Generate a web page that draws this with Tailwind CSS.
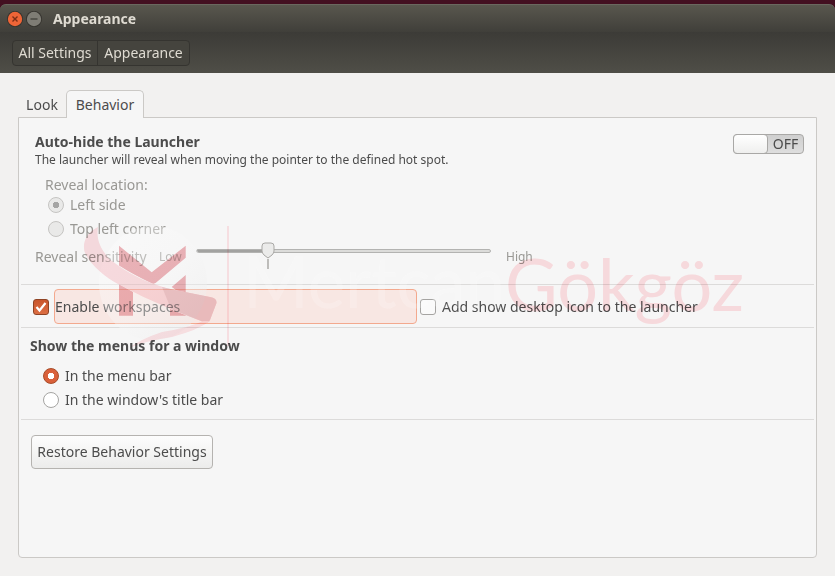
<!DOCTYPE html>
<html lang="en">
<head>
<meta charset="utf-8">
<meta name="viewport" content="width=device-width, initial-scale=1">
<title>Appearance</title>
<script src="https://cdn.jsdelivr.net/npm/@tailwindcss/browser@4"></script>
</head>
<body class="bg-[#431021] font-['Noto_Sans','Open_Sans',sans-serif] text-sm text-[#4c4c4c]">
<div class="relative flex min-h-screen flex-col pt-1">
  <header class="rounded-t-md bg-[#3f3e39] text-[#dfdbd2]">
    <div class="flex h-7 items-center gap-[3px] rounded-t-md border-t border-[#6a685f] bg-linear-to-b from-[#59574e] to-[#403f3a] px-[7px]">
      <button type="button" aria-label="Close" class="size-4 cursor-pointer">
        <svg viewBox="0 0 16 16" class="size-4"><circle cx="8" cy="8" r="8" fill="#33312c"/><circle cx="8" cy="8" r="7.2" fill="#ee6537"/><path d="M5.5 5.5l5 5m0-5l-5 5" stroke="#7b2f17" stroke-width="1.4"/></svg>
      </button>
      <button type="button" aria-label="Minimize" class="size-4 cursor-pointer">
        <svg viewBox="0 0 16 16" class="size-4"><circle cx="8" cy="8" r="8" fill="#33312c"/><circle cx="8" cy="8" r="7.2" fill="#7f7d75"/><path d="M4.5 8h7" stroke="#45443e" stroke-width="1.4"/></svg>
      </button>
      <h1 class="pl-2 font-bold">Appearance</h1>
    </div>
    <nav class="flex h-[41px] items-center bg-linear-to-b from-[#3c3b37] to-[#4f4e47] px-3" aria-label="Settings path">
      <div class="flex h-[26px] items-center rounded border border-[#353430] bg-[#45443e]">
        <a href="#" class="flex h-full w-[85px] items-center justify-center border-r border-[#353430]">All Settings</a>
        <a href="#" class="flex h-full w-[91px] items-center justify-center">Appearance</a>
      </div>
    </nav>
  </header>

  <main class="flex flex-1 flex-col bg-[#f2f1f0] px-[18px] pt-[17px] pb-[18px]">
    <div class="flex h-[27px] items-end" role="tablist">
      <button type="button" role="tab" aria-selected="false" class="h-6 w-12">Look</button>
      <button type="button" role="tab" aria-selected="true" class="relative z-10 -mb-px h-7 w-[78px] rounded-t-[5px] border border-b-0 border-[#cbc9c6] bg-[#f6f6f6]">Behavior</button>
    </div>
    <section role="tabpanel" class="flex-1 rounded-b border border-[#cbc9c6] bg-[#f6f6f6] px-[2px]">
      <div class="border-b border-[#dcdbda] pt-3 pr-[10px] pb-[17px] pl-[14px]">
        <div class="flex justify-between">
          <div>
            <h2 class="leading-6 font-bold">Auto-hide the Launcher</h2>
            <p class="text-xs leading-3">The launcher will reveal when moving the pointer to the defined hot spot.</p>
          </div>
          <button type="button" role="switch" aria-checked="false" aria-label="Auto-hide the Launcher" class="mt-1 flex h-5 w-[71px] rounded border border-[#a9a8a6] bg-linear-to-b from-[#cfcfcf] to-[#dedede] leading-[18px]">
            <span class="-my-px -ml-px h-5 w-[35px] rounded border border-[#a9a8a6] bg-linear-to-b from-white to-[#efefee]"></span>
            <span class="flex-1">OFF</span>
          </button>
        </div>
        <fieldset disabled class="mt-[9px] pl-[10px] text-[#999894]">
          <legend class="leading-5">Reveal location:</legend>
          <label class="flex h-5 items-center gap-1.5 pl-[3px]"><input type="radio" name="reveal" checked class="size-4 appearance-none rounded-full border border-[#c5c4c2] bg-[radial-gradient(circle,#a5a5a4_3px,#e9e9e8_3px)]">Left side</label>
          <label class="mt-1 flex h-5 items-center gap-1.5 pl-[3px]"><input type="radio" name="reveal" class="size-4 appearance-none rounded-full border border-[#c5c4c2] bg-[#e9e9e8]">Top left corner</label>
        </fieldset>
        <div class="mt-2 flex h-5 items-center text-[#999894]">
          <label for="sensitivity" class="w-[124px]">Reveal sensitivity</label>
          <span class="w-[37px] text-xs">Low</span>
          <div class="relative -mt-3 h-1 w-[295px]">
            <input id="sensitivity" type="range" min="0" max="8" value="2" disabled class="block h-1 w-full appearance-none rounded-full border border-[#b3b3b1] bg-linear-to-r from-[#a2a2a0] from-24% to-[#dcdcda] to-24% [&::-webkit-slider-thumb]:appearance-none [&::-webkit-slider-thumb]:opacity-0">
            <svg viewBox="0 0 14 28" class="absolute -top-[7px] left-[65px] h-7 w-[14px]" aria-hidden="true"><path d="M7 17v10" stroke="#85837e"/><path d="M4 1h6q3 0 3 3v5q0 2-2 4l-4 3-4-3q-2-2-2-4V4q0-3 3-3z" fill="#ebebea" stroke="#a9a8a5"/></svg>
          </div>
          <span class="ml-[15px] text-xs">High</span>
        </div>
      </div>

      <div class="flex h-[43px] items-center border-b border-[#dcdbda] pt-px pl-3">
        <label class="flex flex-none items-center gap-[5px]">
          <span class="grid size-4 place-items-center">
            <input type="checkbox" checked class="col-start-1 row-start-1 size-4 appearance-none rounded-[3px] border border-[#8f4324] bg-linear-to-b from-[#c9562c] to-[#dc6e43]">
            <svg viewBox="0 0 16 16" class="pointer-events-none col-start-1 row-start-1 size-4" fill="none" stroke="#fff" stroke-width="2.2"><path d="M3.5 8l3 3.5 6-7.5"/></svg>
          </span>
          <span class="flex h-[35px] w-[363px] items-center rounded border border-[#f3a98e] bg-[#f8e7e3]">Enable workspaces</span>
        </label>
        <label class="ml-[3px] flex items-center gap-1.5"><input type="checkbox" class="size-4 appearance-none rounded-[3px] border border-[#a5a4a2] bg-[#fafafa]">Add show desktop icon to the launcher</label>
      </div>

      <fieldset class="border-b border-[#dcdbda] pb-[9px] pl-[9px]">
        <legend class="pt-2 leading-5 font-bold">Show the menus for a window</legend>
        <label class="mt-[10px] flex h-5 items-center gap-1.5 pl-[13px]"><input type="radio" name="menus" checked class="size-4 appearance-none rounded-full border border-[#a84a26] bg-[radial-gradient(circle,white_3px,#d9603a_3px)]">In the menu bar</label>
        <label class="mt-1 flex h-5 items-center gap-1.5 pl-[13px]"><input type="radio" name="menus" class="size-4 appearance-none rounded-full border border-[#a5a4a2] bg-white">In the window's title bar</label>
      </fieldset>

      <button type="button" class="mt-[15px] ml-[10px] h-[34px] w-[182px] rounded border border-[#b5b3b0] bg-linear-to-b from-[#fdfdfd] to-[#ececeb] whitespace-nowrap">Restore Behavior Settings</button>
    </section>
  </main>

  <!-- Translucent brand mark laid over the window: pale parts, then tinted parts -->
  <svg viewBox="0 0 670 130" class="pointer-events-none absolute top-[220px] left-[80px] h-[130px] w-[670px]" aria-hidden="true">
    <defs><linearGradient id="ball" x1="0" y1="0" x2="1" y2="1"><stop offset="0" stop-color="#fff"/><stop offset=".55" stop-color="#f7f7f7"/><stop offset="1" stop-color="#e7e7e7"/></linearGradient></defs>
    <ellipse cx="73" cy="63" rx="54" ry="57" fill="url(#ball)" opacity=".38"/>
    <text x="163" y="88" font-family="Lato, sans-serif" font-size="71" fill="#fff" opacity=".2">Mertcan</text>
  </svg>
  <svg viewBox="0 0 670 130" class="pointer-events-none absolute top-[220px] left-[80px] h-[130px] w-[670px] mix-blend-multiply" aria-hidden="true">
    <g fill="#f0b6bb">
      <path d="M39 25.7L71.7 52.3 105.7 25.7v12L78 61Q75 64 73 64 52 54 39 45.5z"/>
      <path d="M105.7 55v22L91.700 67zM39 64l14 8v23.700H39zM90 89l15.700 6v.700H90z"/>
    </g>
    <path d="M18 7C16 19 20 29 30 39.500 37 45 43 49 50 53c9 5 17 9 27 12 10 4 19 5 28 7l25 5q7 1 6.500 6L130 100q-2 4-7 1.700L97 91.700 63 76.700 37 63.500C27 58 11 46 5 33 2 25 5 13 18 7z" fill="#fde0e4"/>
    <path d="M82 67q12 3 23 5l25 5q7 1 6.500 6L130 100q-2 4-7 1.700L91 89z" fill="#f0ced2"/>
    <path d="M130 101Q118 110 92 117 65 121 49 128 61 119 82 112 108 108 123 101z" fill="#ffe6e9"/>
    <path d="M148 6v120" stroke="#ffe7ea" stroke-width="2"/>
    <text x="425" y="91" font-family="Lato, sans-serif" font-size="72" fill="#ffe1e4">Gökgöz</text>
  </svg>
</div>
</body>
</html>
